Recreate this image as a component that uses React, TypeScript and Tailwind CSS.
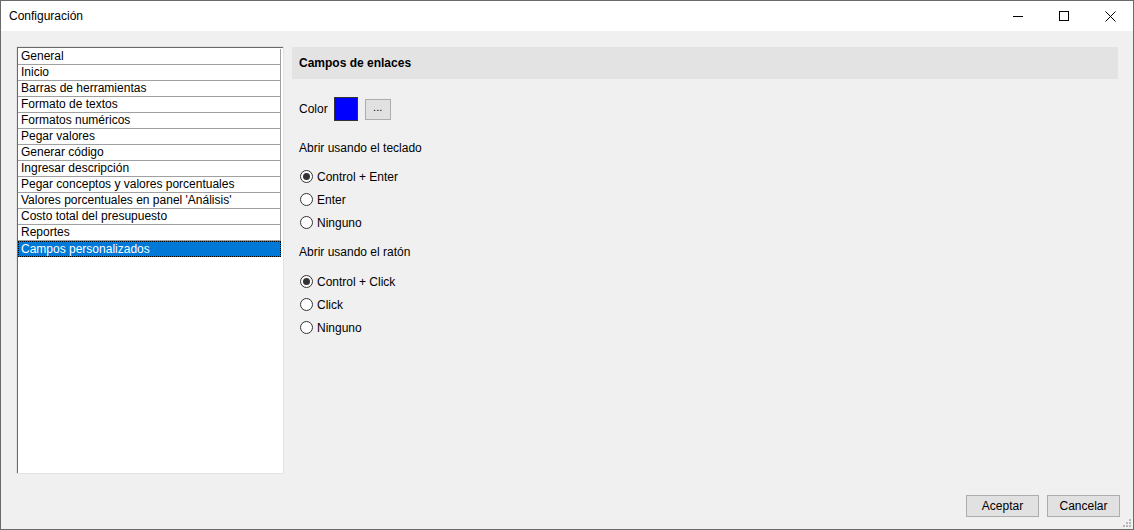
import React from "react";

const items = [
  "General",
  "Inicio",
  "Barras de herramientas",
  "Formato de textos",
  "Formatos numéricos",
  "Pegar valores",
  "Generar código",
  "Ingresar descripción",
  "Pegar conceptos y valores porcentuales",
  "Valores porcentuales en panel 'Análisis'",
  "Costo total del presupuesto",
  "Reportes",
  "Campos personalizados",
];

const Radio = ({ label, checked }: { label: string; checked?: boolean }) => (
  <div className="flex items-center h-[23px]">
    <span className="w-[13px] h-[13px] rounded-full border border-[#333] bg-white flex items-center justify-center ml-[1px]">
      {checked && <span className="w-[7px] h-[7px] rounded-full bg-[#333]"></span>}
    </span>
    <span className="ml-[4px]">{label}</span>
  </div>
);

const App = () => {
  return (
    <div
      className="w-[1134px] h-[530px] border border-[#6a6a6a] flex flex-col bg-[#f0f0f0] text-[12px] text-black overflow-hidden"
      style={{ fontFamily: '"Liberation Sans", Arial, sans-serif' }}
    >
      {/* Title bar */}
      <div className="h-[30px] bg-white flex items-center justify-between shrink-0">
        <span className="pl-[8px] text-[12px]">Configuración</span>
        <div className="flex items-center h-full">
          <div className="w-[46px] h-full flex items-center justify-center">
            <span className="w-[10px] h-px bg-black"></span>
          </div>
          <div className="w-[46px] h-full flex items-center justify-center">
            <span className="w-[10px] h-[10px] border border-black"></span>
          </div>
          <div className="w-[46px] h-full flex items-center justify-center">
            <svg width="11" height="11" viewBox="0 0 11 11">
              <path d="M0.5 0.5L10.5 10.5M10.5 0.5L0.5 10.5" stroke="black" strokeWidth="1" />
            </svg>
          </div>
        </div>
      </div>

      {/* Body */}
      <div className="flex-1 flex flex-col px-[15px] pt-[15px]">
        <div className="flex h-[428px] gap-[8px]">
          {/* List */}
          <div className="w-[268px] h-full border border-[#e3e3e3] shrink-0">
            <div className="w-full h-full border-t border-l border-[#696969] bg-white pt-[1px] pr-[2px]">
              {items.map((it, i) => {
                const sel = i === items.length - 1;
                return (
                  <div
                    key={it}
                    className={
                      "h-[16px] whitespace-nowrap " +
                      (sel
                        ? "bg-[#0078d7] text-white border border-dotted border-black leading-[14px] pl-[2px]"
                        : "border-b border-r border-[#a0a0a0] leading-[15px] pl-[3px]")
                    }
                  >
                    {it}
                  </div>
                );
              })}
            </div>
          </div>

          {/* Panel */}
          <div className="flex-1 pt-[1px]">
            <div className="h-[32px] bg-[#e3e3e3] flex items-center pl-[7px] font-bold">
              Campos de enlaces
            </div>
            <div className="pl-[7px]">
              <div className="flex items-center mt-[18px] h-[24px]">
                <span>Color</span>
                <span className="ml-[6px] w-[24px] h-[24px] bg-[#0000ff] border border-[#333]"></span>
                <span className="ml-[7px] w-[26px] h-[21px] bg-[#e1e1e1] border border-[#adadad] flex items-center justify-center text-[11px] leading-none pb-[3px]">
                  ...
                </span>
              </div>
              <div className="mt-[20px] h-[14px] leading-[14px]">Abrir usando el teclado</div>
              <div className="mt-[10px]">
                <Radio label="Control + Enter" checked />
                <Radio label="Enter" />
                <Radio label="Ninguno" />
              </div>
              <div className="mt-[11px] h-[14px] leading-[14px]">Abrir usando el ratón</div>
              <div className="mt-[11px]">
                <Radio label="Control + Click" checked />
                <Radio label="Click" />
                <Radio label="Ninguno" />
              </div>
            </div>
          </div>
        </div>

        {/* Footer */}
        <div className="flex justify-end gap-[8px] mt-[21px] -mr-[2px]">
          <button className="w-[73px] h-[22px] bg-[#e1e1e1] border border-[#adadad]">Aceptar</button>
          <button className="w-[73px] h-[22px] bg-[#e1e1e1] border border-[#adadad]">Cancelar</button>
        </div>
        <div className="flex justify-end mt-auto pb-[1px] -mr-[14px]">
          <svg width="10" height="10" viewBox="0 0 10 10">
            <rect x="7" y="1" width="2" height="2" fill="#b8b8b8" />
            <rect x="4" y="4" width="2" height="2" fill="#b8b8b8" />
            <rect x="7" y="4" width="2" height="2" fill="#b8b8b8" />
            <rect x="1" y="7" width="2" height="2" fill="#b8b8b8" />
            <rect x="4" y="7" width="2" height="2" fill="#b8b8b8" />
            <rect x="7" y="7" width="2" height="2" fill="#b8b8b8" />
          </svg>
        </div>
      </div>
    </div>
  );
};

export default App;
